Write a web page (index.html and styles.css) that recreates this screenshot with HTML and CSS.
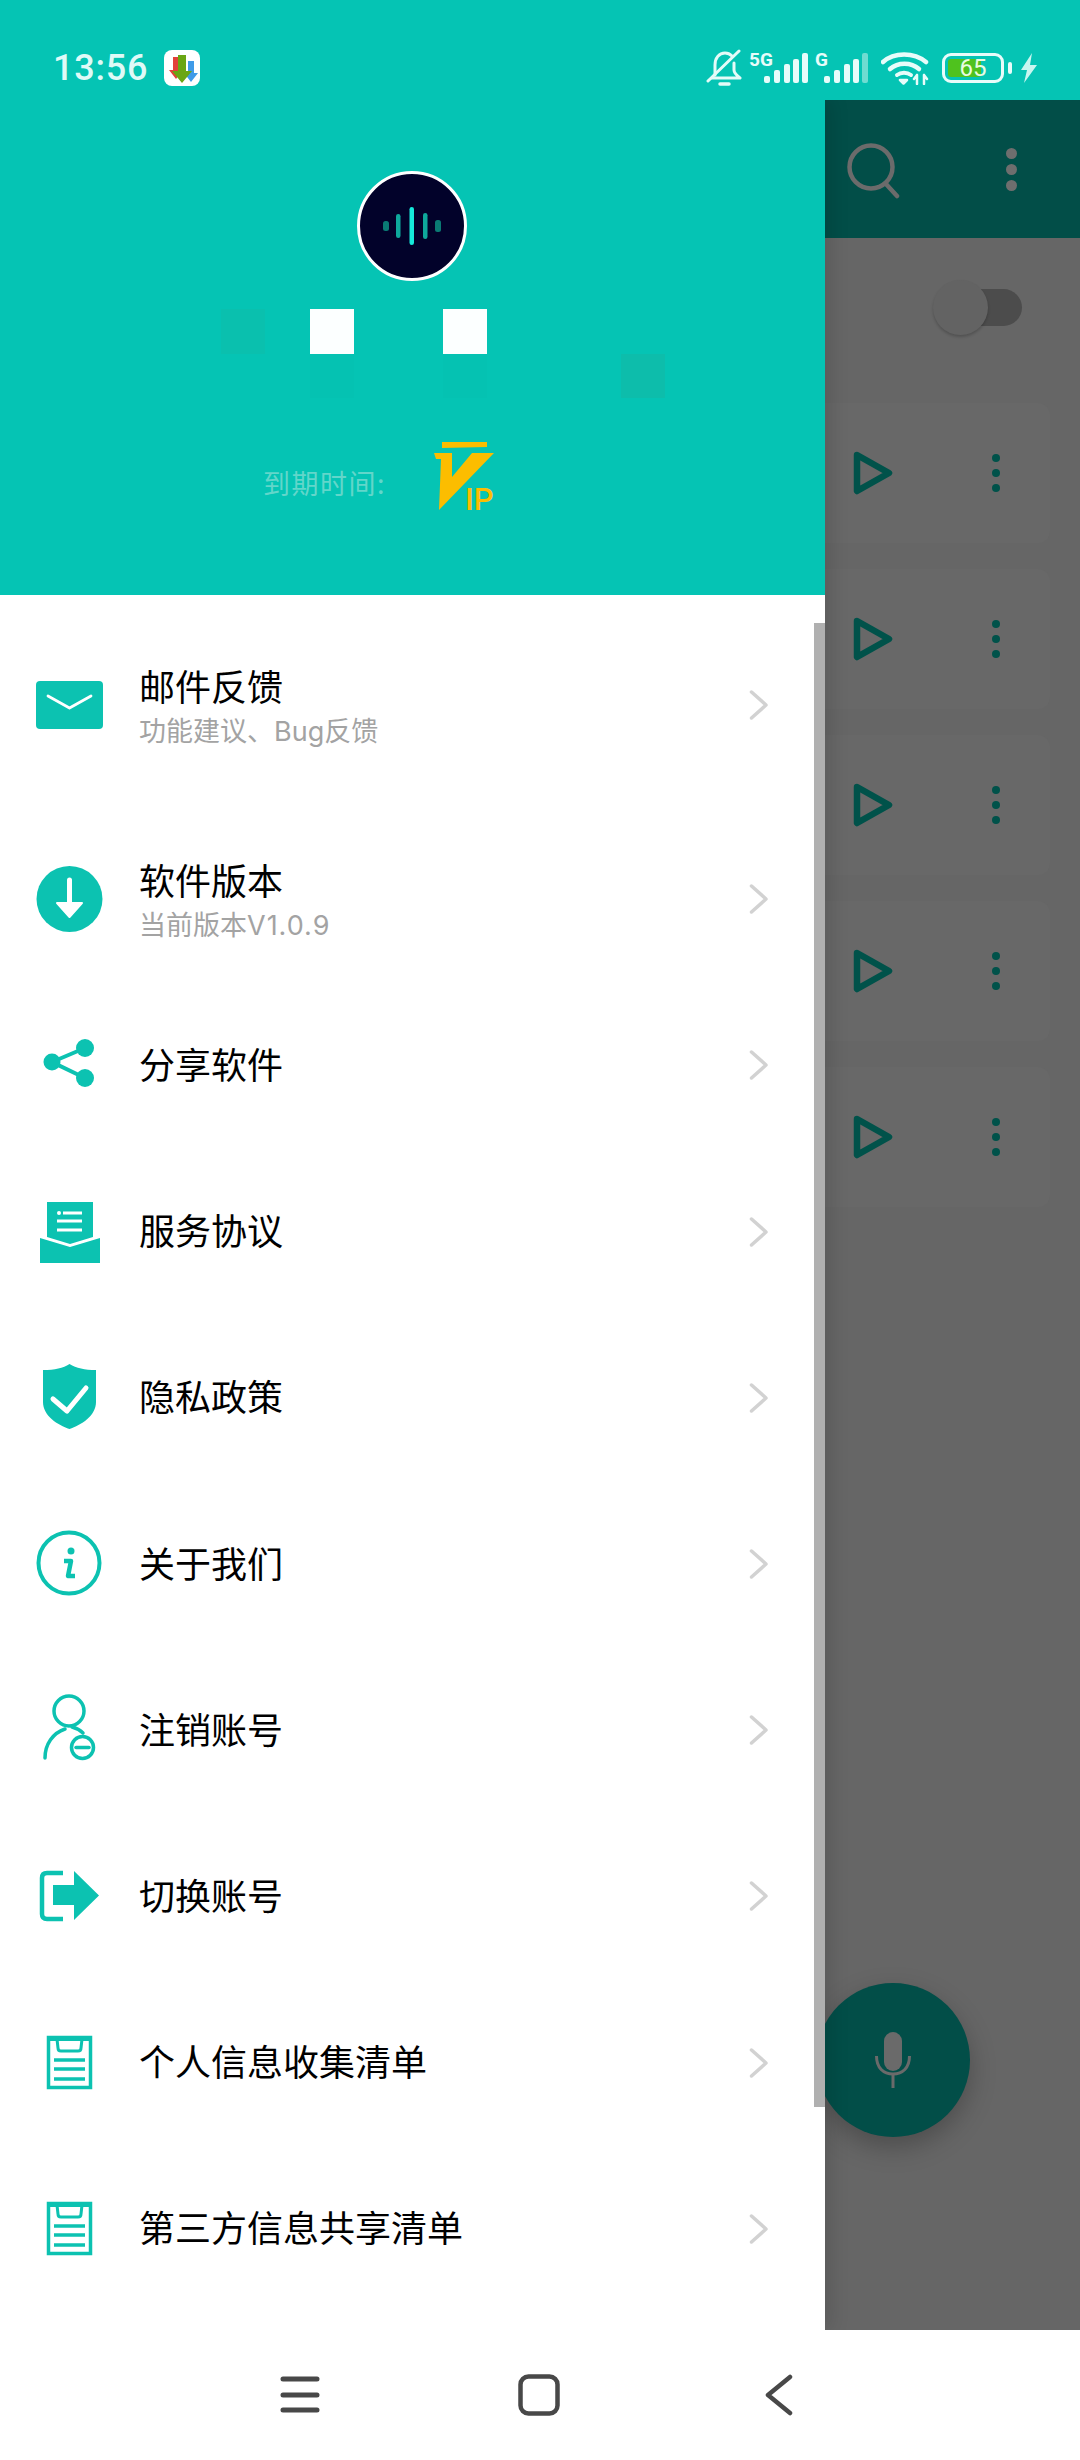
FILE: index.html
```html
<!DOCTYPE html>
<html lang="zh">
<head>
<meta charset="utf-8">
<title>Drawer</title>
<link rel="stylesheet" href="styles.css">
</head>
<body>
<div class="screen">
  <header class="status">
    <span class="time">13:56</span>
    <svg class="app-badge" viewBox="0 0 36 36"><rect width="36" height="36" rx="8" fill="#fff"/><path d="M9 7h6v13h4l-7 9-7-9h4z" fill="#e2403a"/><path d="M24 11h6v12h4l-7 9-7-9h4z" fill="#3f9be8"/><path d="M14 5h8v16h6l-10 12-10-12h6z" fill="#6aa614"/></svg>
    <div class="status-right">
      <svg class="ic-bell" viewBox="0 0 36 38" fill="none" stroke="#e4fbf8" stroke-width="3" stroke-linecap="round" stroke-linejoin="round"><path d="M9 26V16C9 9 13 4 19 4c3 0 5 1 7 3"/><path d="M28 14v7c0 3 2 5 6 8H6"/><path d="M2 32 33 2"/><path d="M14 35h9" stroke-width="3.5"/></svg>
      <div class="signal signal-5g">
        <span class="net">5G</span>
        <svg class="bars" viewBox="0 0 44 30"><g fill="#e8fcfa"><rect x="0" y="23" width="6" height="7" rx="2"/><rect x="10" y="17" width="6" height="13" rx="2"/><rect x="20" y="11" width="6" height="19" rx="2"/><rect x="29" y="6" width="6" height="24" rx="2"/><rect x="38" y="0" width="6" height="30" rx="2"/></g></svg>
      </div>
      <div class="signal signal-g">
        <span class="net">G</span>
        <svg class="bars" viewBox="0 0 44 30"><g fill="#e8fcfa"><rect x="0" y="23" width="6" height="7" rx="2"/><rect x="10" y="17" width="6" height="13" rx="2"/><rect x="20" y="11" width="6" height="19" rx="2"/><rect x="29" y="6" width="6" height="24" rx="2"/></g><rect x="38" y="0" width="6" height="30" rx="2" fill="#6fdcd1"/></svg>
      </div>
      <svg class="ic-wifi" viewBox="0 0 48 34" fill="none" stroke="#e8fcfa" stroke-width="4.5" stroke-linecap="round"><path d="M2 11C13 1 33 1 45 11"/><path d="M9 18c8-7 21-7 29 0"/><path d="M16 24c4-3 10-3 14 0" stroke-width="4"/><path d="M19 29h7l-3.500 3.500z" fill="#e8fcfa" stroke-width="2.500" stroke-linejoin="round"/><path d="M36 24v9M33 28l3-4M43 24v9M46 28l-3-4" stroke-width="2.500"/></svg>
      <div class="battery"><span class="battery-fill"></span><span class="battery-num">65</span></div>
      <span class="battery-tip"></span>
      <svg class="ic-bolt" viewBox="0 0 18 30"><path d="M12 0 1 17h6L4 30l13-18h-7z" fill="#c9f6f0"/></svg>
    </div>
  </header>

  <div class="main">
    <aside class="drawer">
      <section class="profile">
        <div class="avatar">
          <svg viewBox="0 0 60 40" class="wave"><rect x="1" y="15" width="6" height="10" rx="2.500" fill="#0a7a74"/><rect x="14" y="8" width="4.500" height="24" rx="2.200" fill="#0ea89c"/><rect x="27.500" y="1" width="4.500" height="38" rx="2.200" fill="#15eadb"/><rect x="41" y="7" width="4.500" height="26" rx="2.200" fill="#0ea89c"/><rect x="53" y="14" width="6" height="12" rx="2.500" fill="#0a7a74"/></svg>
        </div>
        <div class="mosaic">
          <span class="cell cell-a"></span><span class="cell"></span><span class="cell cell-w"></span><span class="cell"></span><span class="cell"></span><span class="cell cell-w"></span><span class="cell"></span><span class="cell"></span><span class="cell"></span><span class="cell"></span>
          <span class="cell"></span><span class="cell"></span><span class="cell cell-f"></span><span class="cell"></span><span class="cell"></span><span class="cell cell-f"></span><span class="cell"></span><span class="cell"></span><span class="cell"></span><span class="cell cell-b"></span>
        </div>
        <div class="expire">
          <span class="expire-label">到期时间:</span>
          <div class="vip">
            <svg viewBox="0 0 64 70"><path d="M9 0l45 0 0 5-45 1z" fill="#fcbd00"/><path d="M1 11h18v24l20-24h22L6 68l2-51H3z" fill="#fcbd00"/></svg>
            <span class="vip-ip">IP</span>
          </div>
        </div>
      </section>

      <nav class="menu">
        <a class="row row-first">
          <svg class="ic" viewBox="0 0 80 80"><rect x="7" y="16" width="67" height="48" rx="4" fill="#0cc2b1"/><path d="M19 31l21.500 12L62 31" fill="none" stroke="#fff" stroke-width="2.800" stroke-linecap="round" stroke-linejoin="round"/></svg>
          <div class="labels labels-two"><div class="title">邮件反馈</div><div class="sub">功能建议、Bug反馈</div></div>
          <svg class="chev" viewBox="0 0 19 30"><path d="M2.500 2 17 15 2.500 28" /></svg>
        </a>
        <a class="row">
          <svg class="ic" viewBox="0 0 80 80"><circle cx="40.500" cy="40" r="33" fill="#0cc2b1"/><path d="M40.500 21v25" stroke="#fff" stroke-width="5" stroke-linecap="round"/><path d="M28 44h25L40.500 58z" fill="#fff" stroke="#fff" stroke-width="2" stroke-linejoin="round"/></svg>
          <div class="labels labels-two"><div class="title">软件版本</div><div class="sub">当前版本<span class="ver">V1.0.9</span></div></div>
          <svg class="chev" viewBox="0 0 19 30"><path d="M2.500 2 17 15 2.500 28" /></svg>
        </a>
        <a class="row">
          <svg class="ic" viewBox="0 0 80 80"><path d="M56 23 23 37l33 16" fill="none" stroke="#0cc2b1" stroke-width="4"/><circle cx="23" cy="37" r="8.500" fill="#0cc2b1"/><circle cx="56" cy="23" r="9" fill="#0cc2b1"/><circle cx="56" cy="53" r="9" fill="#0cc2b1"/></svg>
          <div class="labels"><div class="title">分享软件</div></div>
          <svg class="chev" viewBox="0 0 19 30"><path d="M2.500 2 17 15 2.500 28" /></svg>
        </a>
        <a class="row">
          <svg class="ic" viewBox="0 0 80 80"><path d="M18 10h46v35l-23 7-23-7z" fill="#0cc2b1"/><path d="M11 46l30 9 30-9v25H11z" fill="#0cc2b1"/><path d="M34 21h19M28 29h25M28 38h25" stroke="#fff" stroke-width="2.800" fill="none"/><circle cx="30" cy="21" r="2" fill="#fff"/></svg>
          <div class="labels"><div class="title">服务协议</div></div>
          <svg class="chev" viewBox="0 0 19 30"><path d="M2.500 2 17 15 2.500 28" /></svg>
        </a>
        <a class="row">
          <svg class="ic" viewBox="0 0 80 80"><path d="M40.500 6c7 4 15 6 26.500 6v32c0 14-15 23-26.500 27C29 67 14 58 14 44V12c12 0 20-2 26.500-6z" fill="#0cc2b1"/><path d="M24 41l14 12 19-23" fill="none" stroke="#fff" stroke-width="5" stroke-linecap="round" stroke-linejoin="round"/></svg>
          <div class="labels"><div class="title">隐私政策</div></div>
          <svg class="chev" viewBox="0 0 19 30"><path d="M2.500 2 17 15 2.500 28" /></svg>
        </a>
        <a class="row">
          <svg class="ic" viewBox="0 0 80 80"><circle cx="40" cy="39" r="30.500" fill="none" stroke="#0cc2b1" stroke-width="4"/><circle cx="42" cy="27" r="3.500" fill="#0cc2b1"/><path d="M35 37h7l-3 15h7" fill="none" stroke="#0cc2b1" stroke-width="4.500" stroke-linejoin="round"/></svg>
          <div class="labels"><div class="title">关于我们</div></div>
          <svg class="chev" viewBox="0 0 19 30"><path d="M2.500 2 17 15 2.500 28" /></svg>
        </a>
        <a class="row">
          <svg class="ic" viewBox="0 0 80 80"><g fill="none" stroke="#0cc2b1" stroke-width="3.500" stroke-linecap="round"><circle cx="40" cy="21" r="15"/><path d="M16 68c0-14 8-25 20-29"/><path d="M43 37c4 1 8 3 11 6"/><circle cx="53.500" cy="57.500" r="11"/><path d="M47 57.500h13"/></g></svg>
          <div class="labels"><div class="title">注销账号</div></div>
          <svg class="chev" viewBox="0 0 19 30"><path d="M2.500 2 17 15 2.500 28" /></svg>
        </a>
        <a class="row">
          <svg class="ic" viewBox="0 0 80 80"><path d="M34 17H18q-5 0-5 5v36q0 5 5 5h16" fill="none" stroke="#0cc2b1" stroke-width="4.500"/><path d="M24 29h21V15l25 24.500L45 64V49H24z" fill="#0cc2b1"/></svg>
          <div class="labels"><div class="title">切换账号</div></div>
          <svg class="chev" viewBox="0 0 19 30"><path d="M2.500 2 17 15 2.500 28" /></svg>
        </a>
        <a class="row">
          <svg class="ic" viewBox="0 0 80 80"><g fill="none" stroke="#0cc2b1"><rect x="19.500" y="14.500" width="42" height="50" stroke-width="3.500"/><path d="M19 16h43" stroke-width="4"/><path d="M28 16l1 9q0 3 3 3h17q3 0 3-3l1-9" stroke-width="3"/><path d="M25 37h31M25 46h31M25 56h31" stroke-width="3.500"/></g></svg>
          <div class="labels"><div class="title">个人信息收集清单</div></div>
          <svg class="chev" viewBox="0 0 19 30"><path d="M2.500 2 17 15 2.500 28" /></svg>
        </a>
        <a class="row">
          <svg class="ic" viewBox="0 0 80 80"><g fill="none" stroke="#0cc2b1"><rect x="19.500" y="14.500" width="42" height="50" stroke-width="3.500"/><path d="M19 16h43" stroke-width="4"/><path d="M28 16l1 9q0 3 3 3h17q3 0 3-3l1-9" stroke-width="3"/><path d="M25 37h31M25 46h31M25 56h31" stroke-width="3.500"/></g></svg>
          <div class="labels"><div class="title">第三方信息共享清单</div></div>
          <svg class="chev" viewBox="0 0 19 30"><path d="M2.500 2 17 15 2.500 28" /></svg>
        </a>
      </nav>
      <span class="scrollbar"></span>
    </aside>

    <div class="backdrop">
      <div class="toolbar">
        <svg class="tb-search" viewBox="0 0 56 56" fill="none" stroke="#6b6b6b" stroke-width="4.500" stroke-linecap="round"><circle cx="24" cy="24" r="21.500"/><path d="M39 41l11 12"/></svg>
        <span class="tb-dots"><i></i><i></i><i></i></span>
      </div>
      <div class="switch-row"><span class="switch"><span class="knob"></span></span></div>
      <div class="cards">
        <div class="card"><svg class="play" viewBox="0 0 40 44"><path d="M4 4 36 22 4 40z" fill="none" stroke="#00524a" stroke-width="6.500" stroke-linejoin="round"/></svg><span class="card-dots"><i></i><i></i><i></i></span></div>
        <div class="card"><svg class="play" viewBox="0 0 40 44"><path d="M4 4 36 22 4 40z" fill="none" stroke="#00524a" stroke-width="6.500" stroke-linejoin="round"/></svg><span class="card-dots"><i></i><i></i><i></i></span></div>
        <div class="card"><svg class="play" viewBox="0 0 40 44"><path d="M4 4 36 22 4 40z" fill="none" stroke="#00524a" stroke-width="6.500" stroke-linejoin="round"/></svg><span class="card-dots"><i></i><i></i><i></i></span></div>
        <div class="card"><svg class="play" viewBox="0 0 40 44"><path d="M4 4 36 22 4 40z" fill="none" stroke="#00524a" stroke-width="6.500" stroke-linejoin="round"/></svg><span class="card-dots"><i></i><i></i><i></i></span></div>
        <div class="card"><svg class="play" viewBox="0 0 40 44"><path d="M4 4 36 22 4 40z" fill="none" stroke="#00524a" stroke-width="6.500" stroke-linejoin="round"/></svg><span class="card-dots"><i></i><i></i><i></i></span></div>
      </div>
      <button class="fab"><svg viewBox="0 0 36 56" fill="none"><rect x="9" y="0" width="18" height="39" rx="9" fill="#6a6a6a"/><path d="M1.500 24c0 12 7 18 16.500 18s16.500-6 16.500-18" stroke="#6a6a6a" stroke-width="3"/><path d="M18 42v14" stroke="#6a6a6a" stroke-width="3"/></svg></button>
    </div>
  </div>

  <footer class="navbar">
    <svg class="nav-ic" viewBox="0 0 40 40" fill="none" stroke="#484848" stroke-width="5" stroke-linecap="round"><path d="M3 4h34M3 20h34M3 35h34"/></svg>
    <svg class="nav-ic" viewBox="0 0 42 42" fill="none" stroke="#484848" stroke-width="4.500"><rect x="2.500" y="2.500" width="37" height="37" rx="8"/></svg>
    <svg class="nav-ic" viewBox="0 0 28 42" fill="none" stroke="#484848" stroke-width="4.500" stroke-linecap="round" stroke-linejoin="round"><path d="M25 3 3 21l22 18"/></svg>
  </footer>
</div>
</body>
</html>
```

FILE: styles.css
```css
* { box-sizing: border-box; }
html, body { margin: 0; padding: 0; }
body { width: 1080px; height: 2460px; overflow: hidden; font-family: "Noto Sans CJK SC", "Noto Sans", sans-serif; background: #fff; }
.screen { width: 1080px; height: 2460px; display: flex; flex-direction: column; position: relative; }

.status { height: 100px; background: #05c4b4; display: flex; align-items: flex-start; padding: 50px 0 0 53px; flex: none; position: relative; z-index: 3; }
.time { font-family: Roboto, sans-serif; font-weight: 500; font-size: 36px; line-height: 36px; color: #dffaf7; width: 92px; letter-spacing: .8px; white-space: nowrap; }
.app-badge { width: 36px; height: 36px; margin-left: 19px; flex: none; }
.status-right { margin-left: auto; margin-top: -1px; display: flex; align-items: flex-end; height: 38px; width: 374px; }
.ic-bell { width: 36px; height: 38px; flex: none; }
.signal { position: relative; width: 44px; height: 30px; flex: none; margin-bottom: 4px; }
.signal-5g { margin-left: 22px; }
.signal-g { margin-left: 16px; }
.bars { width: 44px; height: 30px; display: block; }
.net { position: absolute; font-family: Roboto, sans-serif; font-weight: 700; font-size: 19px; line-height: 19px; color: #e8fcfa; top: -3px; }
.signal-5g .net { left: -15px; letter-spacing: 0; top: -3px; }
.signal-g .net { left: -9px; }
.ic-wifi { width: 48px; height: 34px; margin-left: 13px; flex: none; margin-bottom: 2px; }
.battery { width: 62px; height: 30px; border: 3px solid #e8fcfa; border-radius: 9px; margin-left: 13px; margin-bottom: 4px; position: relative; flex: none; display: flex; align-items: center; justify-content: center; }
.battery-fill { position: absolute; left: 3px; top: 3px; bottom: 3px; width: 33px; background: #4fc21e; border-radius: 3px; }
.battery-num { position: relative; font-family: Roboto, sans-serif; font-size: 24px; line-height: 24px; color: #e8fce0; }
.battery-tip { width: 4px; height: 12px; background: #e8fcfa; border-radius: 2px; margin: 0 0 13px 4px; flex: none; }
.ic-bolt { width: 18px; height: 30px; margin-left: 8px; margin-bottom: 4px; flex: none; }

.main { flex: 1; display: flex; min-height: 0; position: relative; }

.drawer { width: 825px; flex: none; background: #fff; display: flex; flex-direction: column; position: relative; z-index: 2; box-shadow: 6px 0 18px rgba(0,0,0,.12); }
.profile { height: 495px; background: #05c4b4; flex: none; display: flex; flex-direction: column; align-items: flex-start; padding-top: 71px; }
.avatar { width: 110px; height: 110px; border-radius: 50%; border: 3px solid #fff; background: #02022a; display: flex; align-items: center; justify-content: center; flex: none; margin-left: 357px; }
.wave { width: 60px; height: 40px; }
.mosaic { display: grid; grid-template-columns: repeat(10, 44.400px); grid-auto-rows: 44.500px; margin-top: 28px; margin-left: 221px; width: 444px; }
.cell-a { background: #0ac0ae; }
.cell-w { background: #fcffff; }
.cell-f { background: #05c2b2; }
.cell-b { background: #0dbdab; }
.expire { display: flex; align-items: flex-start; margin-top: 44px; margin-left: 263px; }
.expire-label { font-size: 27px; line-height: 36px; color: #62d6ca; margin-top: 23px; width: 170px; letter-spacing: 1.500px; white-space: nowrap; }
.vip { width: 64px; height: 70px; position: relative; flex: none; }
.vip svg { width: 64px; height: 70px; display: block; }
.vip-ip { position: absolute; left: 32px; top: 42px; font-family: Roboto, sans-serif; font-weight: 500; font-size: 31px; line-height: 31px; color: #fcbd00; }

.menu { padding-top: 27px; display: flex; flex-direction: column; flex: 1; }
.row { height: 166.200px; display: flex; align-items: center; padding: 0 57px 0 29px; flex: none; }
.row-first { margin-bottom: 28px; }
.ic { width: 80px; height: 80px; flex: none; display: block; }
.labels { margin-left: 30px; padding-bottom: 5px; }
.labels-two { padding-top: 6px; padding-bottom: 0; }
.title { font-size: 36px; line-height: 44px; color: #000; white-space: nowrap; }
.sub { font-family: Inter, "Noto Sans CJK SC", sans-serif; font-size: 27px; line-height: 44px; margin-top: 3px; color: #a3a3a3; white-space: nowrap; }
.ver { letter-spacing: 1px; }
.chev { width: 19px; height: 30px; margin-left: auto; flex: none; fill: none; stroke: #d2d2d2; stroke-width: 3.500px; stroke-linecap: round; stroke-linejoin: round; }
.scrollbar { position: absolute; right: 0; top: 523px; width: 11px; height: 1484px; background: #b0b0b0; }

.backdrop { flex: 1; background: #666; position: relative; display: flex; flex-direction: column; min-width: 0; }
.toolbar { height: 138px; background: #024e48; display: flex; align-items: center; flex: none; padding-left: 22px; }
.tb-search { width: 56px; height: 56px; flex: none; margin-top: 4px; }
.tb-dots { display: flex; flex-direction: column; gap: 5px; margin-left: 103px; }
.tb-dots i { width: 11px; height: 11px; border-radius: 50%; background: #6e6e6e; display: block; }
.switch-row { height: 165px; display: flex; align-items: center; justify-content: flex-end; padding: 0 58px 27px 0; flex: none; }
.switch { width: 89px; height: 37px; position: relative; display: block; }
.switch::before { content: ""; position: absolute; left: 28px; right: 0; top: 0; bottom: 0; background: #4c4c4c; border-radius: 19px; }
.knob { position: absolute; left: 0; top: -9px; width: 55px; height: 55px; border-radius: 50%; background: #636363; box-shadow: 0 2px 3px rgba(0,0,0,.2); }
.cards { display: flex; flex-direction: column; gap: 26px; padding-right: 30px; }
.card { height: 140px; background: #686868; border-radius: 0 12px 12px 0; display: flex; align-items: center; padding-left: 28px; flex: none; }
.play { width: 40px; height: 44px; flex: none; }
.card-dots { display: flex; flex-direction: column; gap: 7px; margin-left: 99px; }
.card-dots i { width: 8px; height: 8px; border-radius: 50%; background: #00524a; display: block; }
.fab { position: absolute; left: -9px; top: 1883px; width: 154px; height: 154px; border: 0; padding: 0; border-radius: 50%; background: #024e48; display: flex; align-items: center; justify-content: center; box-shadow: 0 10px 26px rgba(0,0,0,.25); }
.fab svg { width: 36px; height: 56px; display: block; }

.navbar { height: 130px; background: #fff; flex: none; position: relative; z-index: 3; display: flex; align-items: center; padding-left: 280px; }
.nav-ic:nth-child(1) { width: 40px; height: 40px; }
.nav-ic:nth-child(2) { width: 42px; height: 42px; margin-left: 198px; }
.nav-ic:nth-child(3) { width: 28px; height: 42px; margin-left: 205px; }
```
